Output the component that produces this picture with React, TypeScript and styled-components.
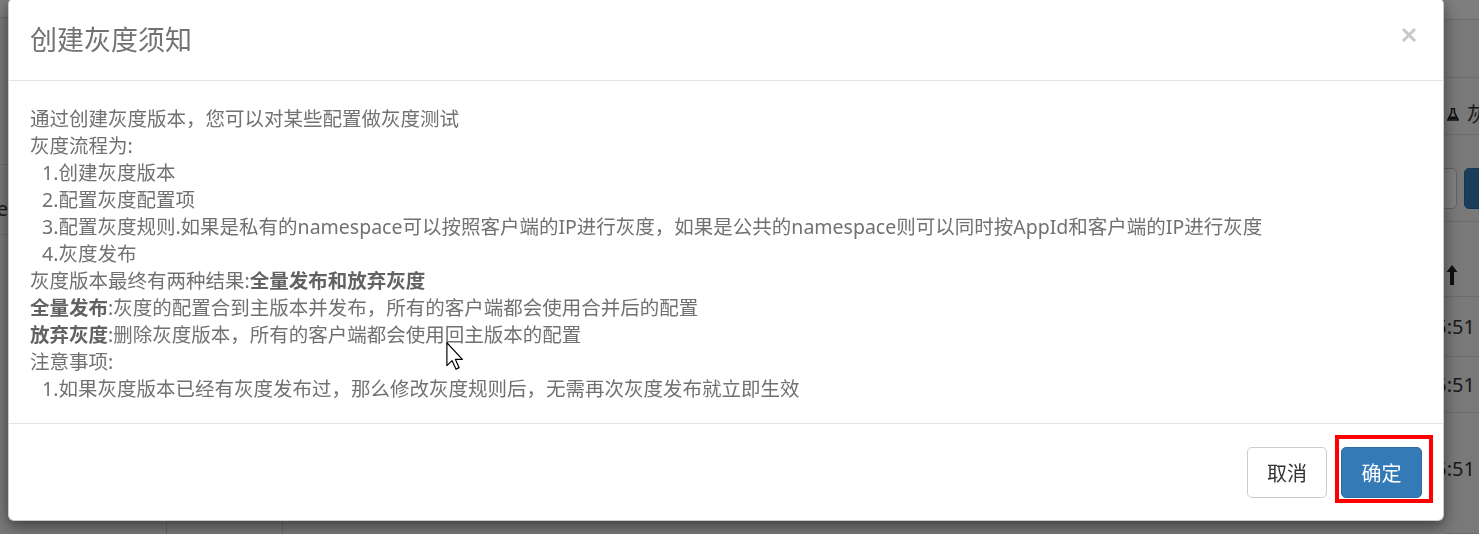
import React from "react";
import styled, { createGlobalStyle } from "styled-components";

const Global = createGlobalStyle`
  html, body { margin: 0; padding: 0; width: 100%; height: 100%; overflow: hidden; }
  body { font-family: "Noto Sans", "Noto Sans CJK SC", sans-serif; background: #fff; }
  #root { width: 100%; height: 100%; }
  * { box-sizing: border-box; }
`;

/* ---------- background page (dimmed by the backdrop) ---------- */
const Page = styled.div`
  width: 1479px;
  height: 534px;
  display: flex;
  flex-direction: column;
  background: #f3f3f3;
  color: #333;
  overflow: hidden;
`;

const Columns = styled.div`
  flex: 1;
  display: flex;
  min-height: 0;
`;

const Strip = styled.div<{ $w?: number }>`
  ${(p) => (p.$w ? `width: ${p.$w}px;` : "flex: 1;")}
  display: flex;
  flex-direction: column;
`;

const BgRow = styled.div<{ $h: number; $bar?: boolean; $align?: string; $pt?: number }>`
  height: ${(p) => p.$h}px;
  flex-shrink: 0;
  display: flex;
  justify-content: ${(p) => p.$align || "flex-start"};
  align-items: flex-start;
  padding-top: ${(p) => p.$pt || 0}px;
  border-bottom: 1px solid #d9d9d9;
  background: ${(p) => (p.$bar ? "#fcfcfc" : "transparent")};
  white-space: nowrap;
  font-size: 20px;
  line-height: 27px;
`;

const Tab = styled.div`
  display: flex;
  align-items: center;
  gap: 8px;
  padding-left: 3px;
  font-size: 20px;
  color: #333;
`;

const ToolBar = styled.div`
  display: flex;
  gap: 7px;
  margin-left: -66px;
`;

const GhostBtn = styled.div<{ $primary?: boolean }>`
  width: 79px;
  height: 41px;
  border-radius: 5px;
  border: 1px solid ${(p) => (p.$primary ? "#2e6da4" : "#c4c4c4")};
  background: ${(p) => (p.$primary ? "#337ab7" : "#fff")};
`;

const SortIcon = styled.div`
  padding-left: 2px;
  display: flex;
`;

const Cell = styled.div`
  padding-right: 4px;
  font-size: 20px;
  color: #333;
`;

const BottomCells = styled.div`
  margin-top: auto;
  height: 40px;
  display: grid;
  grid-template-columns: 159px 116px 1fr;
`;

const BottomCell = styled.div`
  border-right: 1px solid #cfcfcf;
  &:last-child { border-right: none; }
`;

/* ---------- backdrop + modal ---------- */
const Backdrop = styled.div`
  position: fixed;
  inset: 0;
  background: rgba(0, 0, 0, 0.5);
`;

const Modal = styled.div`
  position: fixed;
  left: 8px;
  top: -2px;
  width: 1436px;
  background: #fff;
  border: 1px solid rgba(0, 0, 0, 0.2);
  border-radius: 6px;
  box-shadow: 0 5px 15px rgba(0, 0, 0, 0.5);
  display: flex;
  flex-direction: column;
  font-family: "Noto Sans", "Noto Sans CJK SC", sans-serif;
`;

const Header = styled.div`
  height: 82px;
  display: flex;
  align-items: center;
  justify-content: space-between;
  padding: 0 26px 0 21px;
  border-bottom: 1px solid #e5e5e5;
`;

const Title = styled.h4`
  margin: 0;
  font-size: 27px;
  font-weight: 400;
  color: #727272;
  line-height: 36px;
`;

const Close = styled.button`
  margin-top: -10px;
  width: 16px;
  height: 16px;
  padding: 0;
  border: none;
  background: none;
  display: flex;
  cursor: pointer;
`;

const Body = styled.div`
  padding: 24px 21px 21px 21px;
  font-size: 19.5px;
  line-height: 27px;
  color: #717171;
`;

const Line = styled.div<{ $indent?: boolean }>`
  height: 27px;
  white-space: nowrap;
  padding-left: ${(p) => (p.$indent ? 12 : 0)}px;
`;

const Strong = styled.b`
  font-weight: 700;
  color: #626262;
`;

const Footer = styled.div`
  border-top: 1px solid #e5e5e5;
  padding: 23px 21px 22px;
  display: flex;
  justify-content: flex-end;
  gap: 14px;
`;

const Button = styled.button<{ $primary?: boolean }>`
  height: 51px;
  width: ${(p) => (p.$primary ? 81 : 80)}px;
  border-radius: 5px;
  font-family: "Noto Sans CJK SC", sans-serif;
  font-size: 20px;
  border: 1px solid ${(p) => (p.$primary ? "#2e6da4" : "#ccc")};
  background: ${(p) => (p.$primary ? "#337ab7" : "#fff")};
  color: ${(p) => (p.$primary ? "#fff" : "#333")};
  padding: 0;
  cursor: pointer;
`;

const Highlight = styled.div`
  position: relative;
  display: flex;
  &::after {
    content: "";
    position: absolute;
    top: -12px;
    left: -6px;
    right: -11px;
    bottom: -5px;
    border: 4px solid #ff0000;
    pointer-events: none;
  }
`;

const Cursor = styled.svg`
  position: fixed;
  left: 446px;
  top: 342px;
`;

export default function App() {
  return (
    <>
      <Global />
      <Page>
        <Columns>
          <Strip $w={8}>
            <BgRow $h={18} $bar />
            <BgRow $h={147} />
            <BgRow $h={70} $align="flex-end" $pt={30}>
              <Cell style={{ paddingRight: 0 }}>e</Cell>
            </BgRow>
          </Strip>
          <Strip>
            <BgRow $h={20} $bar />
            <BottomCells>
              <BottomCell />
              <BottomCell />
              <BottomCell />
            </BottomCells>
          </Strip>
          <Strip $w={35}>
            <BgRow $h={20} $bar />
            <BgRow $h={58} />
            <BgRow $h={57} $pt={23}>
              <Tab>
                <svg width="12" height="13" viewBox="0 0 12 13">
                  <path d="M4 0.5h4M4.6 0.5v4L0.8 12h10.4L7.4 4.5v-4" fill="none" stroke="#222" strokeWidth="1.6" />
                  <path d="M3 8.5h6l1.5 2.8h-9z" fill="#222" />
                </svg>
                <span>灰</span>
              </Tab>
            </BgRow>
            <BgRow $h={87} $pt={33}>
              <ToolBar>
                <GhostBtn />
                <GhostBtn $primary />
              </ToolBar>
            </BgRow>
            <BgRow $h={75} $pt={42}>
              <SortIcon>
                <svg width="12" height="22" viewBox="0 0 12 22">
                  <path d="M6 1 L11.5 8 H8 V21 H4 V8 H0.5 Z" fill="#222" />
                </svg>
              </SortIcon>
            </BgRow>
            <BgRow $h={60} $align="flex-end" $pt={16}>
              <Cell>5:51</Cell>
            </BgRow>
            <BgRow $h={56} $align="flex-end" $pt={14}>
              <Cell>5:51</Cell>
            </BgRow>
            <BgRow $h={121} $align="flex-end" $pt={42}>
              <Cell>5:51</Cell>
            </BgRow>
          </Strip>
        </Columns>
      </Page>

      <Backdrop />

      <Modal>
        <Header>
          <Title>创建灰度须知</Title>
          <Close aria-label="close">
            <svg width="16" height="16" viewBox="0 0 16 16">
              <path d="M2 2 L14 14 M14 2 L2 14" stroke="#c8c8c8" strokeWidth="3" />
            </svg>
          </Close>
        </Header>
        <Body>
          <Line>通过创建灰度版本，您可以对某些配置做灰度测试</Line>
          <Line>灰度流程为:</Line>
          <Line $indent>1.创建灰度版本</Line>
          <Line $indent>2.配置灰度配置项</Line>
          <Line $indent>
            3.配置灰度规则.如果是私有的namespace可以按照客户端的IP进行灰度，如果是公共的namespace则可以同时按AppId和客户端的IP进行灰度
          </Line>
          <Line $indent>4.灰度发布</Line>
          <Line>
            灰度版本最终有两种结果:<Strong>全量发布和放弃灰度</Strong>
          </Line>
          <Line>
            <Strong>全量发布</Strong>:灰度的配置合到主版本并发布，所有的客户端都会使用合并后的配置
          </Line>
          <Line>
            <Strong>放弃灰度</Strong>:删除灰度版本，所有的客户端都会使用回主版本的配置
          </Line>
          <Line>注意事项:</Line>
          <Line $indent>1.如果灰度版本已经有灰度发布过，那么修改灰度规则后，无需再次灰度发布就立即生效</Line>
        </Body>
        <Footer>
          <Button>取消</Button>
          <Highlight>
            <Button $primary>确定</Button>
          </Highlight>
        </Footer>
      </Modal>

      <Cursor width="18" height="28" viewBox="0 0 12 19">
        <path d="M0.5 0.5 L0.5 16 L4 12.6 L6.6 18.4 L8.8 17.4 L6.3 11.8 L11 11.8 Z" fill="#fff" stroke="#000" strokeWidth="0.8" strokeLinejoin="round" />
      </Cursor>
    </>
  );
}
